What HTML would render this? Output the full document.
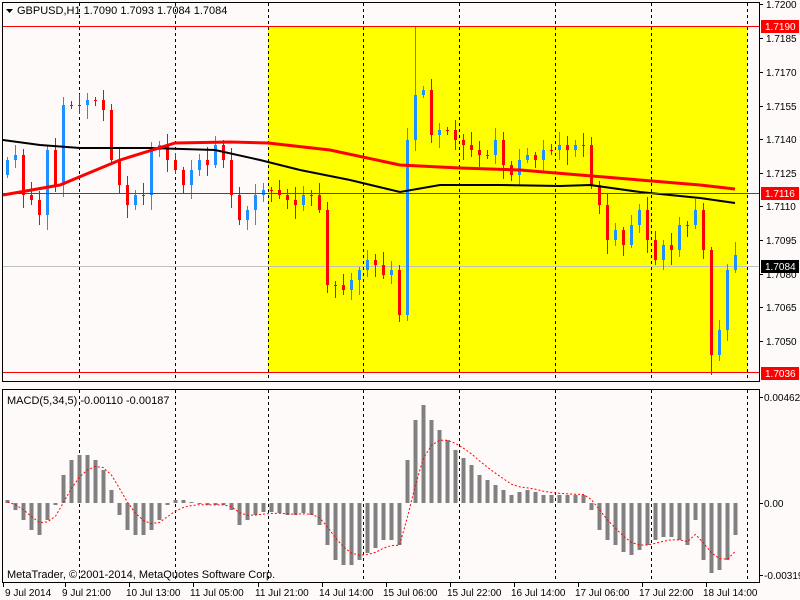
<!DOCTYPE html>
<html><head><meta charset="utf-8">
<style>
html,body{margin:0;padding:0;background:#fffafa;width:800px;height:600px;overflow:hidden}
svg text{font-family:"Liberation Sans",sans-serif;font-size:11px;fill:#000}
#axis text{font-size:10px}
</style></head>
<body>
<svg id="s" width="800" height="600" xmlns="http://www.w3.org/2000/svg">
<rect width="800" height="600" fill="#fffafa"/>
<rect x="268" y="26" width="479" height="346" fill="#ffff00"/>
<g id="grid"></g>
<line x1="3" y1="266.5" x2="759" y2="266.5" stroke="#c0c0c0"/>
<g id="candles"></g>
<polyline fill="none" stroke="#000" stroke-width="2" points="3,140 40,145 80,148 110,148 150,148 215,150 260,160 300,170 350,180 400,192 440,185 500,185 560,186 590,185 640,192 700,198 735,203"/>
<polyline fill="none" stroke="#f00" stroke-width="3" points="3,195 60,185 120,160 175,143 230,142 268,143 330,150 400,165 460,168 520,170 580,175 640,180 700,185 735,189"/>
<line x1="3" y1="26.5" x2="759" y2="26.5" stroke="#f00"/>
<line x1="3" y1="193.5" x2="759" y2="193.5" stroke="#f00"/>
<line x1="3" y1="372.5" x2="759" y2="372.5" stroke="#f00"/>
<g id="macd"></g>
<rect x="2.5" y="2.5" width="757" height="379" fill="none" stroke="#000"/>
<rect x="2.5" y="389.5" width="757" height="193" fill="none" stroke="#000"/>
<path d="M6 9 L13 9 L9.5 13 Z" fill="#000"/>
<text x="17" y="14">GBPUSD,H1  1.7090 1.7093 1.7084 1.7084</text>
<text x="7" y="404">MACD(5,34,5) -0.00110 -0.00187</text>
<text x="7" y="578">MetaTrader, © 2001-2014, MetaQuotes Software Corp.</text>
<g id="axis"></g>
</svg>
<script>
var NS="http://www.w3.org/2000/svg";
function el(p,t,a){var e=document.createElementNS(NS,t);for(var k in a)e.setAttribute(k,a[k]);p.appendChild(e);return e;}
var s=document.getElementById('s'),g=document.getElementById('grid'),c=document.getElementById('candles'),m=document.getElementById('macd'),ax=document.getElementById('axis');
var vx=[79,175,268,363,459,555,651,747];
vx.forEach(function(x){el(g,'line',{x1:x+.5,y1:3,x2:x+.5,y2:381,stroke:'#000','stroke-dasharray':'3,3'});el(g,'line',{x1:x+.5,y1:390,x2:x+.5,y2:582,stroke:'#000','stroke-dasharray':'3,3'});});
var cl=[160,155,195,200,215,150,185,105,105,105,100,100,110,160,185,205,195,195,150,145,160,170,185,170,160,165,145,160,195,220,210,195,190,190,195,200,205,195,195,210,285,285,290,280,270,260,265,275,270,315,140,95,90,135,130,130,140,145,150,155,155,140,165,175,160,155,160,150,150,145,150,145,145,185,205,240,230,245,225,210,240,260,245,250,225,225,210,250,355,330,270,255];
var prev=175;
for(var i=0;i<cl.length;i++){var x=7+i*8,o=prev,cc=cl[i];var up=cc<o;var hi=Math.min(o,cc)-(3+(i*7)%11),lo=Math.max(o,cc)+(3+(i*5)%13);
if(i==51){hi=26;}if(i==88){lo=375;}if(i==49){lo=322}
var col=up?'#1e90ff':'#ff0000';
el(c,'line',{x1:x+.5,y1:hi,x2:x+.5,y2:lo,stroke:col});
var t=Math.min(o,cc),h=Math.max(1,Math.abs(o-cc));el(c,'rect',{x:x-1,y:t,width:3,height:h,fill:col});prev=cc;}
var hv=[500,510,520,530,535,520,505,475,460,455,455,460,470,490,515,530,535,535,530,520,505,500,500,502,503,505,505,505,510,525,520,515,512,512,513,515,515,513,515,525,545,560,565,565,560,553,548,540,540,545,460,420,405,420,430,440,450,458,465,475,480,485,490,495,492,490,492,495,495,495,495,495,495,510,530,540,545,552,555,550,545,540,537,537,540,545,520,560,573,570,560,535];
var z=503,sg=503,pts=[];
for(var i=0;i<hv.length;i++){var x=7+i*8,v=hv[i];el(m,'rect',{x:x-1.5,y:Math.min(v,z),width:4,height:Math.max(1,Math.abs(v-z)),fill:'#808080'});sg=sg+(v-sg)/3;pts.push((x+.5)+','+sg.toFixed(1));}
el(m,'polyline',{points:pts.join(' '),fill:'none',stroke:'#f00','stroke-dasharray':'2,2'});
var pl=[["1.7200",4],["1.7185",38],["1.7170",72],["1.7155",106],["1.7140",139],["1.7125",173],["1.7110",206],["1.7095",240],["1.7080",274],["1.7065",307],["1.7050",341]];
pl.forEach(function(p){el(ax,'line',{x1:759,y1:p[1]+.5,x2:763,y2:p[1]+.5,stroke:'#000'});var t=el(ax,'text',{x:766,y:p[1]+4});t.textContent=p[0];});
[["1.7190",26],["1.7116",193],["1.7036",373]].forEach(function(p){el(ax,'rect',{x:761,y:p[1]-6,width:38,height:13,fill:'#f00'});var t=el(ax,'text',{x:765,y:p[1]+4,style:'fill:#fff'});t.textContent=p[0];});
el(ax,'rect',{x:761,y:260,width:38,height:13,fill:'#000'});var t=el(ax,'text',{x:765,y:270,style:'fill:#fff'});t.textContent="1.7084";
[["0.00462",397],["0.00",503],["-0.00319",575]].forEach(function(p){el(ax,'line',{x1:759,y1:p[1]+.5,x2:763,y2:p[1]+.5,stroke:'#000'});var t=el(ax,'text',{x:764,y:p[1]+4});t.textContent=p[0];});
var tl=[["9 Jul 2014",3],["9 Jul 21:00",65],["10 Jul 13:00",129],["11 Jul 05:00",193],["11 Jul 21:00",258],["14 Jul 14:00",322],["15 Jul 06:00",386],["15 Jul 22:00",450],["16 Jul 14:00",514],["17 Jul 06:00",578],["17 Jul 22:00",642],["18 Jul 14:00",706]];
tl.forEach(function(p,i){el(ax,'line',{x1:p[1]+.5,y1:582,x2:p[1]+.5,y2:587,stroke:'#000'});var t=el(ax,'text',{x:p[1]+(i?-3:2),y:596});t.textContent=p[0];});
</script>
</body></html>
